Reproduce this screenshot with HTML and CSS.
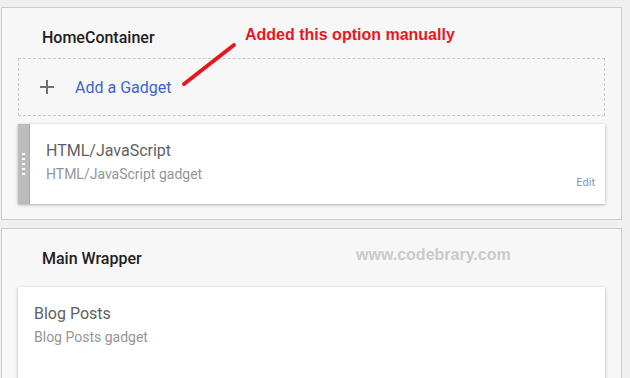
FILE: index.html
```html
<!DOCTYPE html>
<html lang="en">
<head>
  <meta charset="UTF-8">
  <meta name="viewport" content="width=device-width, initial-scale=1.0">
  <title>Layout</title>
  <link rel="stylesheet" href="styles.css">
</head>
<body>

  <!-- HomeContainer section -->
  <div class="section home">
    <div class="section-title">HomeContainer</div>

    <div class="add-gadget">
      <svg class="plus" width="14" height="14" viewBox="0 0 14 14">
        <path d="M7 0v14M0 7h14" stroke="#707070" stroke-width="2"/>
      </svg>
      <span class="add-link">Add a Gadget</span>
    </div>

    <div class="gadget">
      <div class="handle">
        <span class="dot"></span><span class="dot"></span><span class="dot"></span><span class="dot"></span><span class="dot"></span>
      </div>
      <div class="gadget-body">
        <div class="gadget-name">HTML/JavaScript</div>
        <div class="gadget-type">HTML/JavaScript gadget</div>
      </div>
      <div class="edit">Edit</div>
    </div>

    <!-- annotation -->
    <div class="note">Added this option manually</div>
    <svg class="arrow" width="60" height="50" viewBox="0 0 60 50">
      <path d="M4 44L54 5" stroke="#e8171f" stroke-width="4" stroke-linecap="round"/>
    </svg>
  </div>

  <!-- Main Wrapper section -->
  <div class="section main">
    <div class="section-title">Main Wrapper</div>
    <div class="watermark">www.codebrary.com</div>

    <div class="gadget plain">
      <div class="gadget-body">
        <div class="gadget-name">Blog Posts</div>
        <div class="gadget-type">Blog Posts gadget</div>
      </div>
    </div>
  </div>

</body>
</html>
```

FILE: styles.css
```css
/* Page */
body {
  margin: 0;
  height: 378px;
  background-color: #efefef;
  font-family: Roboto, "Liberation Sans", sans-serif;
  overflow: hidden;
}

/* Section panels */
.section {
  position: relative;
  margin: 7px 8px 0 1px;
  padding: 0 16px 0 16px;
  background-color: #f7f7f7;
  border: 1px solid #cccccc;
}
.section.home {
  height: 211px;
}
.section.main {
  margin-top: 8px;
  height: 160px;
  overflow: hidden;
}

.section-title {
  padding: 20px 0 0 24px;
  line-height: 20px;
  font-size: 16px;
  font-weight: 500;
  color: #212121;
}
.home .section-title {
  padding-bottom: 10px;
}
.main .section-title {
  padding-bottom: 18px;
}

/* Add a gadget box */
.add-gadget {
  display: flex;
  align-items: center;
  height: 56px;
  border: 1px dashed #c8c8c8;
}
.plus {
  margin-left: 21px;
}
.add-link {
  margin-left: 21px;
  font-size: 16px;
  color: #3b63d6;
}

/* Gadget card */
.gadget {
  display: flex;
  height: 80px;
  margin-top: 8px;
  background-color: #fff;
  box-shadow: 0 1px 3px rgba(0, 0, 0, 0.3);
}
.gadget.plain {
  margin-top: 0;
  height: 110px;
}
.handle {
  width: 12px;
  display: flex;
  flex-direction: column;
  align-items: center;
  justify-content: center;
  gap: 3px;
  background-color: #bcbcbc;
  border-right: 1px solid #a9a9a9;
  box-sizing: border-box;
}
.dot {
  width: 3px;
  height: 2px;
  background-color: #fff;
}
.gadget-body {
  flex: 1;
  padding: 17px 0 0 16px;
}
.gadget-name {
  font-size: 16px;
  line-height: 20px;
  color: #5f5f5f;
}
.gadget-type {
  margin-top: 4px;
  font-size: 14px;
  line-height: 18px;
  color: #959595;
}
.edit {
  align-self: flex-end;
  padding: 0 10px 15px 0;
  font-size: 11px;
  line-height: 12px;
  color: #8290c6;
}

/* Overlays drawn on top of the screenshot */
.note {
  position: absolute;
  left: 243px;
  top: 18px;
  font-family: "Liberation Sans", Arial, sans-serif;
  font-weight: bold;
  font-size: 16px;
  color: #e8171f;
}
.arrow {
  position: absolute;
  left: 178px;
  top: 32px;
}
.watermark {
  position: absolute;
  left: 354px;
  top: 17px;
  font-family: "Liberation Sans", Arial, sans-serif;
  font-weight: bold;
  font-size: 16px;
  color: #cacaca;
}
```
